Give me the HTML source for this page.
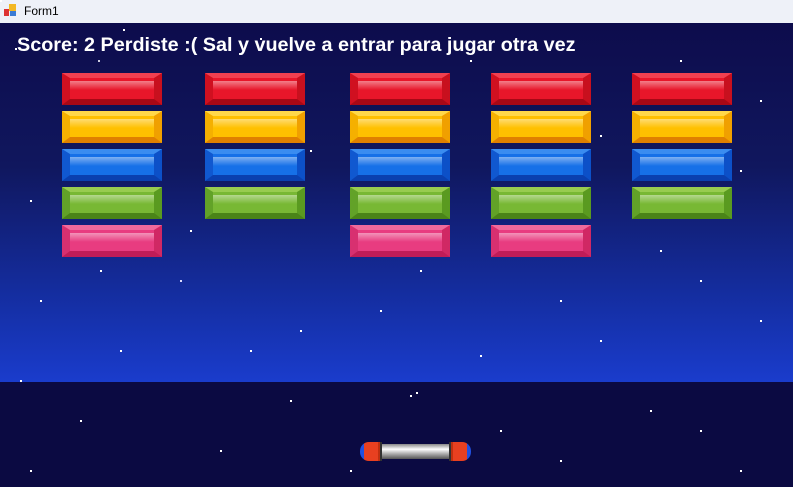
<!DOCTYPE html>
<html><head><style>
*{margin:0;padding:0;box-sizing:border-box}
body{width:793px;height:487px;overflow:hidden;position:relative;font-family:"Liberation Sans",sans-serif;background:#0b0b42}
.tb{position:absolute;left:0;top:0;width:793px;height:23px;background:#eef1f8;font-size:12px;color:#000}
.tb span{position:absolute;left:24px;top:4px}
.ic{position:absolute;left:4px;top:4px;width:13px;height:13px}
.game{position:absolute;left:0;top:23px;width:793px;height:359px;background:linear-gradient(#0d0c4c 0%,#10175e 40%,#1530a8 80%,#1a3ccc 100%)}
.bot{position:absolute;left:0;top:382px;width:793px;height:105px;background:#0b0a42}
.score{position:absolute;left:17px;top:34px;color:#fff;font-weight:bold;font-size:19.8px;letter-spacing:0px}
.b{position:absolute;width:100px;height:32px;border-style:solid;border-width:5px 8px 6px 8px}
.b i{position:absolute;left:0;right:0;top:3px;height:9px;opacity:.45;background:linear-gradient(#fff,transparent)}
.r{background:#e8162a;border-color:#f04050 #c8101e #a80816 #d01020}
.y{background:#ffc000;border-color:#ffd84a #f0a000 #e08000 #f5b000}
.bl{background:#1670e8;border-color:#3a8cf0 #0c50c8 #0a40b0 #1058d0}
.g{background:#78b834;border-color:#98cc50 #5a9a20 #4a8418 #62a228}
.p{background:#e83c80;border-color:#f06a9c #d02864 #c01c58 #d83070}
.pad{position:absolute;left:360px;top:442px;width:111px;height:19px;border-radius:9px;background:linear-gradient(90deg,#2050e0 0 4px,#e84020 4px 18px,#c03010 18px 20px,#333 20px 22px,transparent 22px 89px,#333 89px 91px,#c03010 91px 93px,#e84020 93px 107px,#2050e0 107px)}
.pad:after{content:"";position:absolute;left:22px;top:2px;width:67px;height:15px;background:linear-gradient(#888,#fff 35%,#bbb 60%,#555)}
.st{position:absolute;left:0;top:0;width:2px;height:2px;background:#fff}
</style></head><body>
<div class="tb"><svg class="ic" viewBox="0 0 13 13"><rect x="0" y="5" width="5" height="7" fill="#d33"/><rect x="5" y="0" width="7" height="7" fill="#f3b824"/><rect x="6" y="7" width="6" height="5" fill="#3a7bd5"/></svg><span>Form1</span></div>
<div class="game"></div><div class="bot"></div>
<div class="st" style="box-shadow:15px 48px #fff,98px 60px #ccd,123px 29px #fff,260px 38px #fff,310px 150px #fff,40px 300px #fff,180px 280px #ddf,420px 270px #fff,560px 300px #fff,700px 280px #fff,740px 170px #fff,760px 320px #fff,600px 340px #fff,300px 330px #fff,120px 350px #fff,30px 200px #fff,190px 230px #fff,470px 60px #fff,680px 60px #fff,760px 100px #fff,410px 395px #fff,416px 392px #fff,500px 430px #fff,80px 420px #fff,220px 450px #fff,650px 410px #fff,740px 470px #fff,30px 470px #fff,290px 400px #fff,560px 460px #fff,600px 135px #fff,545px 200px #fff,250px 350px #fff,380px 310px #fff,480px 355px #fff,660px 250px #fff,100px 270px #fff,20px 380px #fff,350px 470px #fff,700px 430px #fff"></div>
<div class="score">Score: 2 Perdiste :( Sal y vuelve a entrar para jugar otra vez</div>
<div class="b r" style="left:62px;top:73px"><i></i></div><div class="b r" style="left:205px;top:73px"><i></i></div><div class="b r" style="left:350px;top:73px"><i></i></div><div class="b r" style="left:491px;top:73px"><i></i></div><div class="b r" style="left:632px;top:73px"><i></i></div>
<div class="b y" style="left:62px;top:111px"><i></i></div><div class="b y" style="left:205px;top:111px"><i></i></div><div class="b y" style="left:350px;top:111px"><i></i></div><div class="b y" style="left:491px;top:111px"><i></i></div><div class="b y" style="left:632px;top:111px"><i></i></div>
<div class="b bl" style="left:62px;top:149px"><i></i></div><div class="b bl" style="left:205px;top:149px"><i></i></div><div class="b bl" style="left:350px;top:149px"><i></i></div><div class="b bl" style="left:491px;top:149px"><i></i></div><div class="b bl" style="left:632px;top:149px"><i></i></div>
<div class="b g" style="left:62px;top:187px"><i></i></div><div class="b g" style="left:205px;top:187px"><i></i></div><div class="b g" style="left:350px;top:187px"><i></i></div><div class="b g" style="left:491px;top:187px"><i></i></div><div class="b g" style="left:632px;top:187px"><i></i></div>
<div class="b p" style="left:62px;top:225px"><i></i></div><div class="b p" style="left:350px;top:225px"><i></i></div><div class="b p" style="left:491px;top:225px"><i></i></div>
<div class="pad"></div>
</body></html>
